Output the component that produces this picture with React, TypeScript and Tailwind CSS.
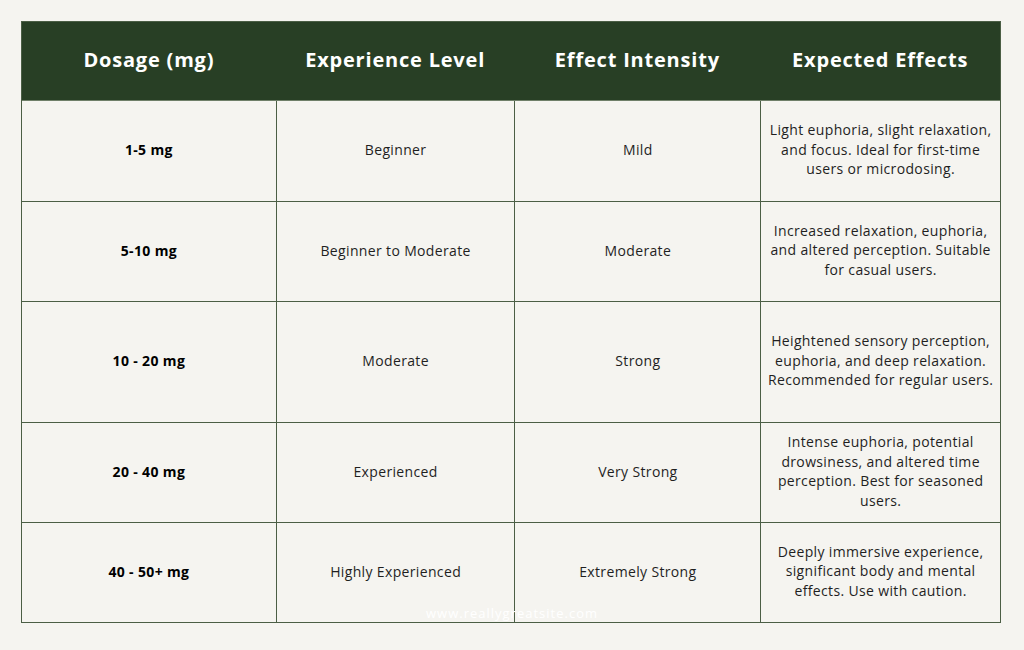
import React from 'react';

const rows = [
    { dose: '1-5 mg', level: 'Beginner', intensity: 'Mild', effects: 'Light euphoria, slight relaxation, and focus. Ideal for first-time users or microdosing.', h: 'h-[100px]' },
    { dose: '5-10 mg', level: 'Beginner to Moderate', intensity: 'Moderate', effects: 'Increased relaxation, euphoria, and altered perception. Suitable for casual users.', h: 'h-[100px]' },
    { dose: '10 - 20 mg', level: 'Moderate', intensity: 'Strong', effects: 'Heightened sensory perception, euphoria, and deep relaxation. Recommended for regular users.', h: 'h-[121px]' },
    { dose: '20 - 40 mg', level: 'Experienced', intensity: 'Very Strong', effects: 'Intense euphoria, potential drowsiness, and altered time perception. Best for seasoned users.', h: 'h-[100px]' },
    { dose: '40 - 50+ mg', level: 'Highly Experienced', intensity: 'Extremely Strong', effects: 'Deeply immersive experience, significant body and mental effects. Use with caution.', h: 'h-[100px]' },
];

const headers = ['Dosage (mg)', 'Experience Level', 'Effect Intensity', 'Expected Effects'];
const widths = ['w-[254px]', 'w-[239px]', 'w-[246px]', 'w-[240px]'];

export default function App() {
    return (
        <div className="w-[1024px] h-[650px] bg-[#f5f4f0] pt-[21px] pl-[21px] font-['Open_Sans',sans-serif] relative">
            <div className="w-[980px] border border-[#4b5e45]">
                {/* Header */}
                <div className="flex h-[79px] bg-[#283f25] border-b border-[#6f7f69]">
                    {headers.map((h, i) => (
                        <div key={h} className={`${widths[i]} flex items-center justify-center pb-[2px] text-white text-[20px] font-bold tracking-[0.8px]`}>
                            {h}
                        </div>
                    ))}
                </div>

                {/* Rows */}
                {rows.map((r, idx) => (
                    <div key={r.dose} className={`flex ${r.h} ${idx > 0 ? 'border-t border-[#4b5e45]' : ''} text-[14px] tracking-[0.35px] text-[#1f1f1f]`}>
                        <div className="w-[254px] flex items-center justify-center pb-[3px] font-bold text-black">{r.dose}</div>
                        <div className="w-[239px] flex items-center justify-center pb-[3px] border-l border-[#4b5e45]">{r.level}</div>
                        <div className="w-[246px] flex items-center justify-center pb-[3px] border-l border-[#4b5e45]">{r.intensity}</div>
                        <div className="w-[240px] flex items-center justify-center pb-[3px] border-l border-[#4b5e45] px-[6px] text-center leading-[19.5px]">
                            {r.effects}
                        </div>
                    </div>
                ))}
            </div>

            {/* Watermark */}
            <div className="absolute left-0 right-0 top-[604px] text-center text-white text-[13px] tracking-[1px]">
                www.reallygreatsite.com
            </div>
        </div>
    );
}
